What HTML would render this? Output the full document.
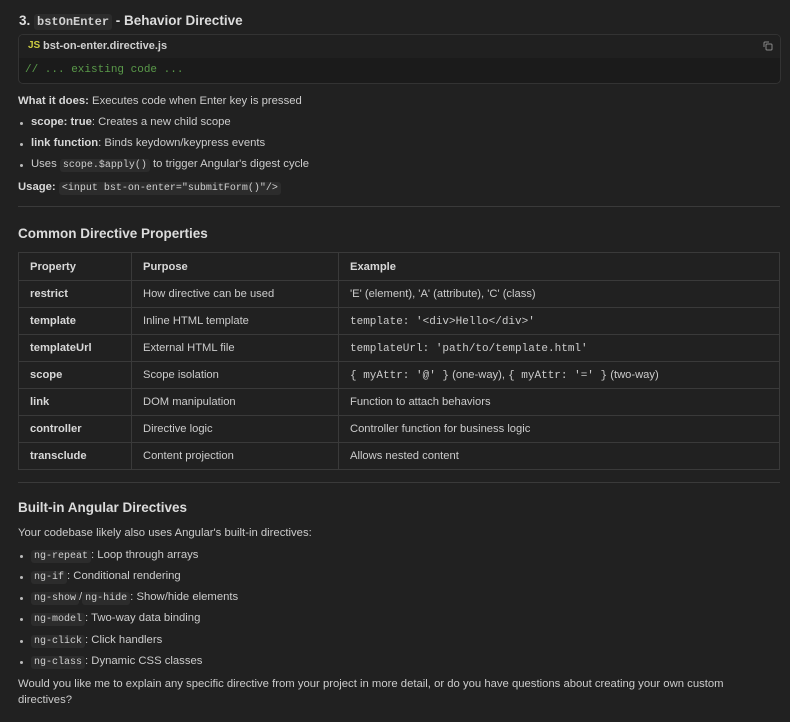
<!DOCTYPE html>
<html><head><meta charset="utf-8"><style>
html,body{margin:0;padding:0;background:#212121;}
body{width:790px;height:722px;position:relative;overflow:hidden;font-family:"Liberation Sans",sans-serif;font-size:11.3px;color:#cccccc;}
.a{position:absolute;white-space:nowrap;}
.h{font-weight:bold;color:#dcdcdc;}
code,.m{font-family:"Liberation Mono",monospace;font-size:10px;}
code{background:#2c2c2c;border-radius:3px;padding:1px 3px;color:#d0d0d0;}
b{color:#d8d8d8;}
.dot{position:absolute;width:3px;height:3px;border-radius:50%;background:#bbb;}
table{position:absolute;left:18px;top:252px;width:762px;border-collapse:collapse;}
td{border:1px solid #3a3a3a;height:26px;padding:0 11px;font-size:11.2px;color:#cccccc;}
tr:first-child td{height:27px;font-weight:bold;color:#d8d8d8;}
td:first-child{font-weight:bold;color:#d8d8d8;}
.hr{position:absolute;left:18px;width:762px;height:1px;background:#3a3a3a;}
</style></head><body>
<div class="a h" style="left:19px;top:13px;font-size:13.5px;">3. <code style="font-size:12px;font-weight:bold;">bstOnEnter</code> - Behavior Directive</div>
<div style="position:absolute;left:18px;top:34px;width:761px;height:48px;border:1px solid #333;border-radius:5px;background:#1b1b1b;overflow:hidden;">
 <div style="height:23px;background:#202020;"></div>
 <div class="a" style="left:9px;top:5px;font-weight:bold;font-size:10px;color:#cbcb41;">JS</div>
 <div class="a" style="left:24px;top:5px;font-size:11px;color:#d0d0d0;font-weight:bold;">bst-on-enter.directive.js</div>
 <svg style="position:absolute;left:744px;top:6px" width="10" height="10" viewBox="0 0 10 10" fill="none" stroke="#888" stroke-width="1"><rect x="3" y="3" width="6" height="6" rx="1"/><path d="M1 6V2a1 1 0 0 1 1-1h4"/></svg>
 <div class="a m" style="left:6px;top:29px;color:#5a9a4a;font-size:11px;">// ... existing code ...</div>
</div>
<div class="a" style="left:18px;top:95px;"><b>What it does:</b> Executes code when Enter key is pressed</div>
<div class="dot" style="left:20px;top:122px"></div><div class="a" style="left:31px;top:116px;"><b>scope: true</b>: Creates a new child scope</div>
<div class="dot" style="left:20px;top:143px"></div><div class="a" style="left:31px;top:137px;"><b>link function</b>: Binds keydown/keypress events</div>
<div class="dot" style="left:20px;top:164px"></div><div class="a" style="left:31px;top:158px;">Uses <code>scope.$apply()</code> to trigger Angular's digest cycle</div>
<div class="a" style="left:18px;top:181px;"><b>Usage:</b> <code>&lt;input bst-on-enter="submitForm()"/&gt;</code></div>
<div class="hr" style="top:206px"></div>
<div class="a h" style="left:18px;top:226px;font-size:13.5px;">Common Directive Properties</div>
<table>
<colgroup><col style="width:113px"><col style="width:207px"><col></colgroup>
<tr><td>Property</td><td>Purpose</td><td>Example</td></tr>
<tr><td>restrict</td><td>How directive can be used</td><td>'E' (element), 'A' (attribute), 'C' (class)</td></tr>
<tr><td>template</td><td>Inline HTML template</td><td><span class="m" style="font-size:11px">template: '&lt;div&gt;Hello&lt;/div&gt;'</span></td></tr>
<tr><td>templateUrl</td><td>External HTML file</td><td><span class="m" style="font-size:11px">templateUrl: 'path/to/template.html'</span></td></tr>
<tr><td>scope</td><td>Scope isolation</td><td><span class="m" style="font-size:11px">{ myAttr: '@' }</span> (one-way), <span class="m" style="font-size:11px">{ myAttr: '=' }</span> (two-way)</td></tr>
<tr><td>link</td><td>DOM manipulation</td><td>Function to attach behaviors</td></tr>
<tr><td>controller</td><td>Directive logic</td><td>Controller function for business logic</td></tr>
<tr><td>transclude</td><td>Content projection</td><td>Allows nested content</td></tr>
</table>
<div class="hr" style="top:482px"></div>
<div class="a h" style="left:18px;top:500px;font-size:13.5px;">Built-in Angular Directives</div>
<div class="a" style="left:18px;top:527px;">Your codebase likely also uses Angular's built-in directives:</div>
<div class="dot" style="left:20px;top:555px"></div><div class="a" style="left:31px;top:549px;"><code>ng-repeat</code>: Loop through arrays</div>
<div class="dot" style="left:20px;top:576px"></div><div class="a" style="left:31px;top:570px;"><code>ng-if</code>: Conditional rendering</div>
<div class="dot" style="left:20px;top:597px"></div><div class="a" style="left:31px;top:591px;"><code>ng-show</code>/<code>ng-hide</code>: Show/hide elements</div>
<div class="dot" style="left:20px;top:618px"></div><div class="a" style="left:31px;top:612px;"><code>ng-model</code>: Two-way data binding</div>
<div class="dot" style="left:20px;top:640px"></div><div class="a" style="left:31px;top:634px;"><code>ng-click</code>: Click handlers</div>
<div class="dot" style="left:20px;top:661px"></div><div class="a" style="left:31px;top:655px;"><code>ng-class</code>: Dynamic CSS classes</div>
<div class="a" style="left:18px;top:678px;">Would you like me to explain any specific directive from your project in more detail, or do you have questions about creating your own custom</div>
<div class="a" style="left:18px;top:694px;">directives?</div>
</body></html>
